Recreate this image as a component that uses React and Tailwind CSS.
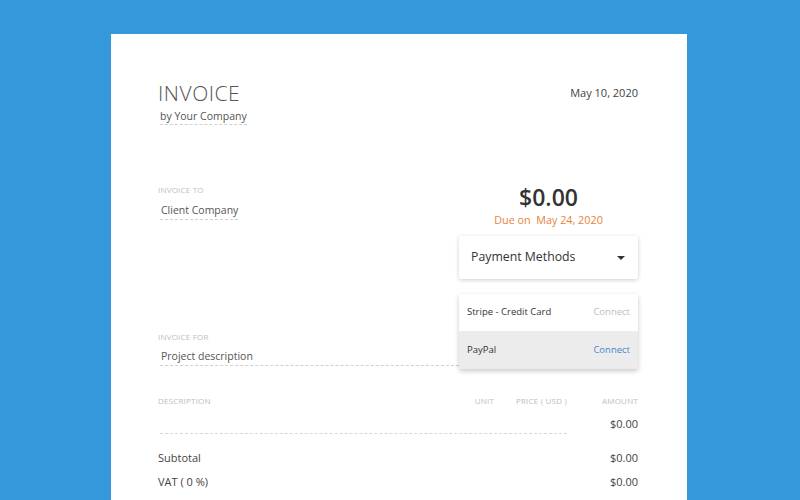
import React from 'react';

const font = { fontFamily: '"Open Sans", "Noto Sans", sans-serif' };

function Label({ children, className = '' }) {
  return (
    <div className={`text-[8px] leading-[12px] uppercase tracking-wide text-[#bdbdbd] ${className}`}>
      {children}
    </div>
  );
}

export default function App() {
  return (
    <div className="h-[500px] overflow-hidden bg-[#3498db] pt-[34px]" style={font}>
      <div className="ml-[111px] w-[576px] min-h-[466px] bg-white pl-[47px] pr-[49px] pt-[44px] pb-10">
        {/* Header */}
        <div className="flex justify-between items-start">
          <div>
            <div className="text-[21px] leading-[30px] font-light tracking-wide text-[#555]">INVOICE</div>
            <div className="w-fit ml-[2px] text-[10.5px] leading-[16px] text-[#555] border-b border-dashed border-[#d0d0d0]">
              by Your Company
            </div>
          </div>
          <div className="mt-[7px] text-[11px] leading-[16px] text-[#444]">May 10, 2020</div>
        </div>

        {/* Client / total */}
        <div className="mt-[56px] flex items-start">
          <div className="flex-1 pt-[3px]">
            <Label>Invoice to</Label>
            <div className="mt-[5px] w-fit ml-[2px] pl-[1px] text-[10.5px] leading-[18px] text-[#555] border-b border-dashed border-[#d0d0d0]">
              Client Company
            </div>

            <Label className="mt-[111px]">Invoice for</Label>
            <div className="mt-[4px] ml-[2px] pl-[1px] text-[10.5px] leading-[18px] text-[#555] border-b border-dashed border-[#d0d0d0]">
              Project description
            </div>
          </div>

          <div className="w-[179px] text-center">
            <div className="text-[23px] leading-[32px] font-semibold text-[#333]">$0.00</div>
            <div className="-mt-[1px] text-[10.8px] leading-[16px] text-[#e8833a]">Due on&nbsp; May 24, 2020</div>
            <div className="relative mt-[8px]">
              <div className="h-[43px] flex items-center justify-between px-[12px] bg-white rounded-[2px] shadow-[0_1px_4px_rgba(0,0,0,0.2)] text-left">
                <span className="text-[12.3px] text-[#333]">Payment Methods</span>
                <span className="mr-[1px] w-0 h-0 border-l-[4px] border-r-[4px] border-t-[4px] border-l-transparent border-r-transparent border-t-[#333]" />
              </div>
              <div className="absolute left-0 right-0 top-[58px] bg-white rounded-[2px] shadow-[0_2px_5px_rgba(0,0,0,0.22)] text-left z-10">
                <div className="h-[37px] flex items-center justify-between px-[8px] text-[9.5px]">
                  <span className="text-[#333]">Stripe - Credit Card</span>
                  <span className="text-[#bdbdbd]">Connect</span>
                </div>
                <div className="h-[38px] flex items-center justify-between px-[8px] text-[9.5px] bg-[#ececec]">
                  <span className="text-[#333]">PayPal</span>
                  <span className="text-[#4a86d0]">Connect</span>
                </div>
              </div>
            </div>
          </div>
        </div>

        {/* Items table */}
        <div className="mt-[29px] flex items-start text-[8px] leading-[12px] uppercase text-[#bdbdbd] tracking-wide">
          <div className="flex-1">Description</div>
          <div className="w-[40px] text-right">Unit</div>
          <div className="w-[73px] text-right">Price ( USD )</div>
          <div className="w-[71px] text-right">Amount</div>
        </div>
        <div className="mt-[9px] flex items-start">
          <div className="flex-1 ml-[2px] h-[18px] border-b border-dashed border-[#d8d8d8]" />
          <div className="w-[71px] text-right text-[11px] leading-[16px] text-[#444]">$0.00</div>
        </div>

        {/* Totals */}
        <div className="mt-[16px] flex justify-between text-[11px] leading-[16px] text-[#444]">
          <span>Subtotal</span>
          <span>$0.00</span>
        </div>
        <div className="mt-[8px] flex justify-between text-[11px] leading-[16px] text-[#444]">
          <span>VAT ( 0 %)</span>
          <span>$0.00</span>
        </div>
      </div>
    </div>
  );
}
